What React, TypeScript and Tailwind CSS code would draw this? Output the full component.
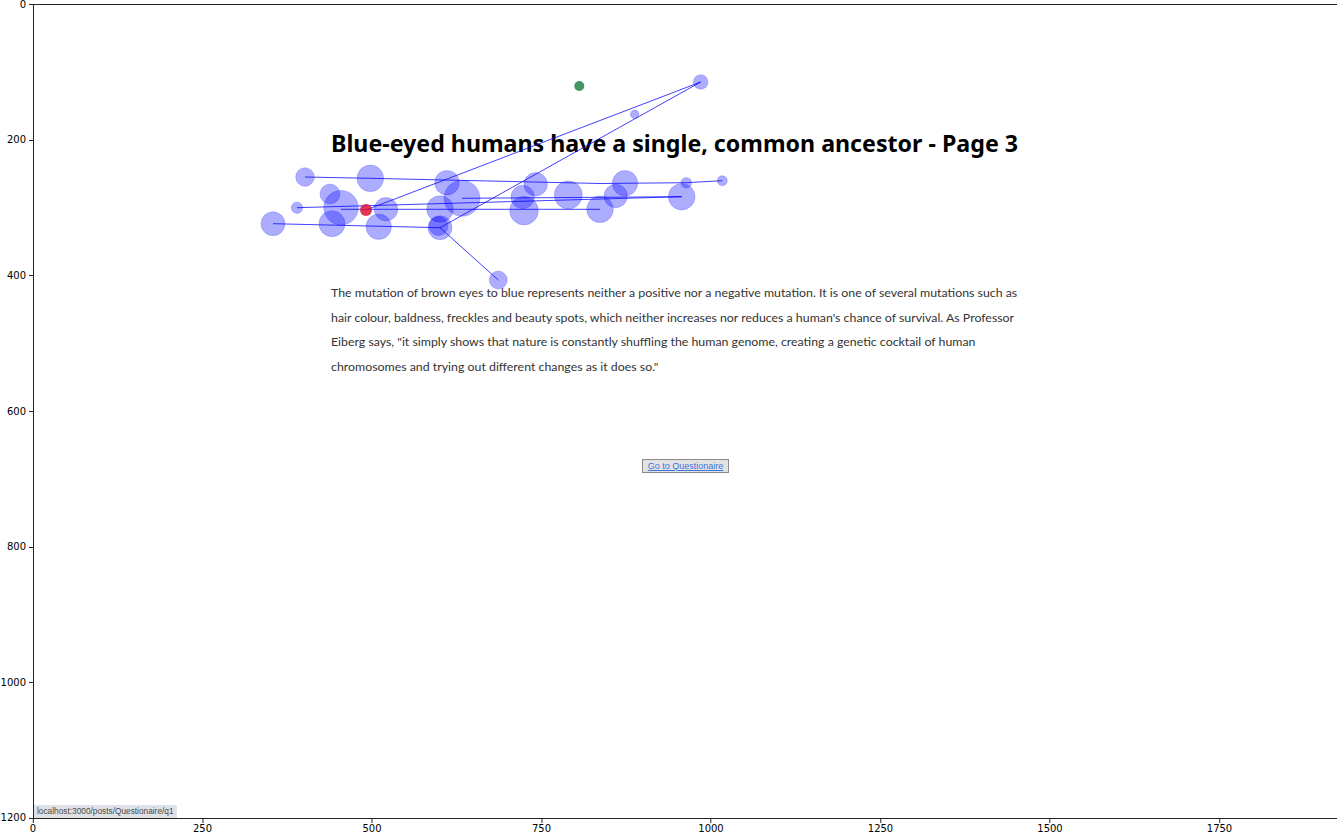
import React from "react";

const SCALE = 0.678;

const xTicks = [0, 250, 500, 750, 1000, 1250, 1500, 1750];
const yTicks = [0, 200, 400, 600, 800, 1000, 1200];

// fixations in screen coords: [x, y, r]
const fixations: [number, number, number][] = [
  [305, 177, 9.3],
  [370.3, 178.3, 13.3],
  [330, 194, 10],
  [341, 207.7, 17.3],
  [297, 207.7, 5.7],
  [386, 209.3, 11.7],
  [273, 223.7, 12],
  [332, 223.7, 13],
  [378.7, 226.7, 12.7],
  [447, 182.7, 12.3],
  [462, 198.3, 18],
  [440, 209, 13.3],
  [440, 227.7, 12],
  [438.5, 226, 9.5],
  [535.7, 184.3, 11.7],
  [522.7, 197, 11.7],
  [524, 210.7, 14.3],
  [568.3, 195, 14],
  [625, 183.3, 12.7],
  [615.7, 196, 11.7],
  [600, 209.3, 13.3],
  [681.7, 196.7, 13.3],
  [686.3, 182.7, 5.3],
  [722.3, 180.7, 5],
  [498.3, 280, 9],
  [700.7, 82, 7.3],
  [634.7, 114.3, 4.3],
];

const saccades: [number, number, number, number][] = [
  [305, 177, 370.3, 178.3],
  [370.3, 178.3, 600, 183.5],
  [600, 183.5, 686.3, 182.7],
  [686.3, 182.7, 722.3, 180.7],
  [297, 207.7, 681.7, 196.7],
  [462, 198.3, 681.7, 196.7],
  [341, 209.3, 600, 209.3],
  [273, 223.7, 440, 227.7],
  [440, 227.7, 498.3, 280],
  [440, 227.7, 700.7, 82],
  [366, 210, 700.7, 82],
];

const paragraph = [
  "The mutation of brown eyes to blue represents neither a positive nor a negative mutation. It is one of several mutations such as",
  "hair colour, baldness, freckles and beauty spots, which neither increases nor reduces a human's chance of survival. As Professor",
  'Eiberg says, "it simply shows that nature is constantly shuffling the human genome, creating a genetic cocktail of human',
  'chromosomes and trying out different changes as it does so."',
];

function Scanpath() {
  return (
    <svg
      className="pointer-events-none absolute -left-px -top-px"
      width={1304}
      height={815}
      viewBox="33 4 1304 815"
    >
      {fixations.map(([x, y, r], i) => (
        <circle
          key={i}
          cx={x}
          cy={y}
          r={r}
          fill="rgba(0,0,255,0.32)"
          stroke="rgba(0,0,255,0.18)"
          strokeWidth={1}
        />
      ))}
      {saccades.map(([x1, y1, x2, y2], i) => (
        <line
          key={i}
          x1={x1}
          y1={y1}
          x2={x2}
          y2={y2}
          stroke="rgba(0,0,255,0.75)"
          strokeWidth={1}
        />
      ))}
      <circle cx={366} cy={210} r={6} fill="rgba(220,20,60,0.85)" />
      <circle cx={579.3} cy={86} r={5} fill="rgba(34,130,70,0.85)" />
    </svg>
  );
}

function YAxis() {
  return (
    <div className="relative h-[815px] w-[33px] shrink-0">
      {yTicks.map((v) => (
        <div
          key={v}
          className="absolute right-0 flex h-[10px] items-center gap-[3px]"
          style={{ top: v * SCALE - 4.3 }}
        >
          <span className="text-[10px] leading-none text-black">{v}</span>
          <span className="h-px w-[4px] bg-[#262626]" />
        </div>
      ))}
    </div>
  );
}

function XAxis() {
  return (
    <div className="relative ml-[33px] h-[17px] w-[1304px]">
      {xTicks.map((v) => (
        <div
          key={v}
          className="absolute top-0 flex -translate-x-1/2 flex-col items-center gap-[1px]"
          style={{ left: v * SCALE }}
        >
          <span className="h-[4px] w-px bg-[#262626]" />
          <span className="text-[10px] leading-none text-black">{v}</span>
        </div>
      ))}
    </div>
  );
}

function PageImage() {
  return (
    <div className="relative flex h-[815px] w-[1304px] shrink-0 flex-col border-y border-l border-[#262626] bg-white">
      <div className="flex flex-col pl-[297px] pt-[124px]">
        <h1
          className="h-[28px] whitespace-nowrap text-[23.2px] font-bold leading-[28px] text-black"
          style={{ fontFamily: "'Noto Sans', 'Open Sans', sans-serif" }}
        >
          Blue-eyed humans have a single, common ancestor - Page 3
        </h1>
        <div
          className="mt-[124px] flex flex-col text-[12.35px] leading-[24.5px] text-[#333]"
          style={{ fontFamily: "Lato, 'Noto Sans', sans-serif" }}
        >
          {paragraph.map((line) => (
            <div key={line} className="whitespace-nowrap">
              {line}
            </div>
          ))}
        </div>
      </div>
      <div className="mt-[80px] flex justify-center">
        <button
          className="flex h-[14px] w-[87px] items-center justify-center border border-[#8a8a8a] bg-[#e3e3e3] text-[9px] leading-none text-[#3a75e0] underline"
          style={{ fontFamily: "'Liberation Sans', Arial, sans-serif" }}
        >
          Go to Questionaire
        </button>
      </div>
      <div className="mt-auto flex">
        <div
          className="flex h-[13px] items-center rounded-tr-[3px] bg-[#dee1e6] px-[3px] text-[8.3px] leading-none text-[#4a4a4a]"
          style={{ fontFamily: "'Liberation Sans', Arial, sans-serif" }}
        >
          localhost:3000/posts/Questionaire/q1
        </div>
      </div>
      <Scanpath />
    </div>
  );
}

export default function App() {
  return (
    <div
      className="h-[836px] w-[1337px] overflow-hidden bg-white pt-[4px]"
      style={{ fontFamily: "'DejaVu Sans', sans-serif" }}
    >
      <div className="flex">
        <YAxis />
        <PageImage />
      </div>
      <XAxis />
    </div>
  );
}
